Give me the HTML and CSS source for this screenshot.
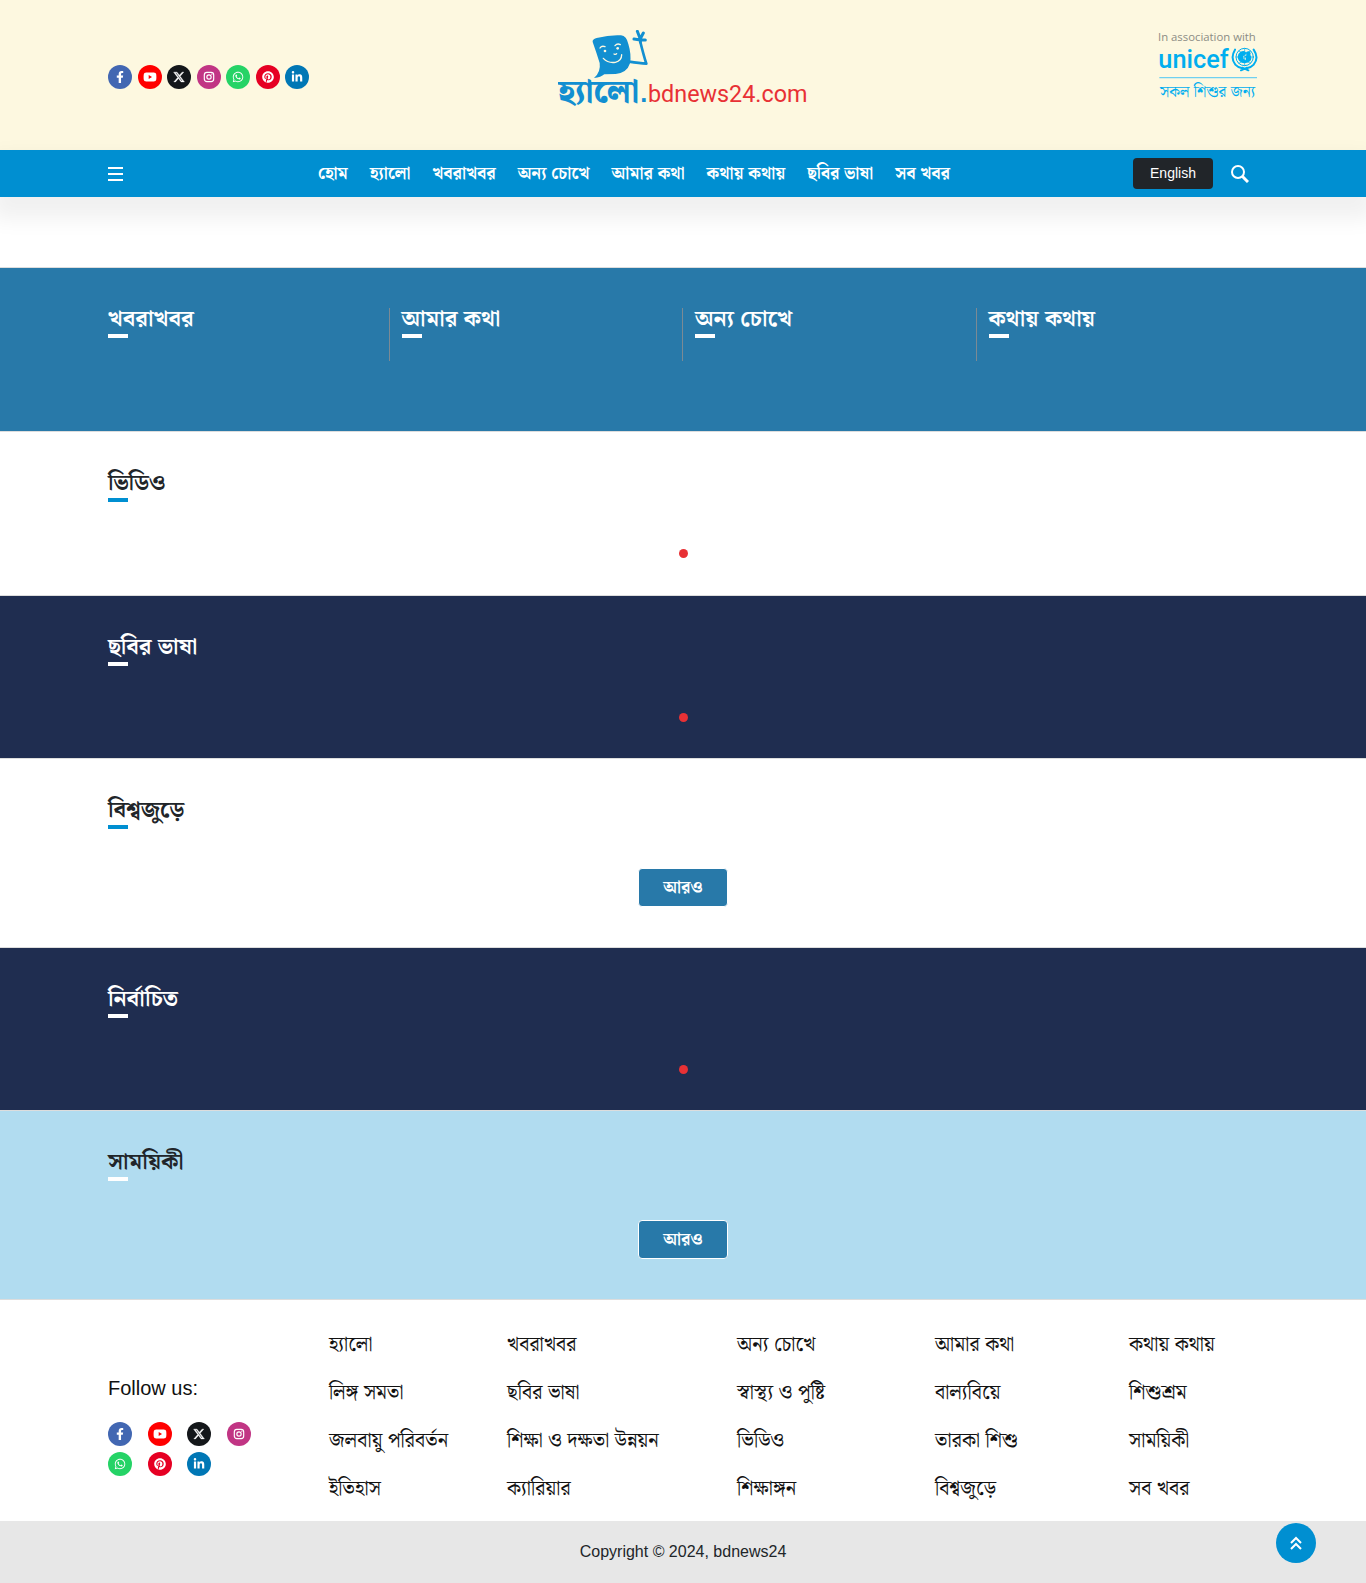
FILE: index.html
```html
<!DOCTYPE html>
<html lang="bn">
<head>
<meta charset="utf-8">
<meta name="viewport" content="width=device-width, initial-scale=1">
<title>হ্যালো</title>
<link rel="stylesheet" href="styles.css">
</head>
<body>
<svg class="sprite" aria-hidden="true">
  <symbol id="facebook" viewBox="0 0 320 512"><path d="M279.14 288l14.22-92.66h-88.91v-60.13c0-25.35 12.42-50.06 52.24-50.06h40.42V6.26S260.43 0 225.36 0c-73.22 0-121.08 44.38-121.08 124.72v70.62H22.89V288h81.39v224h100.17V288z"/></symbol>
  <symbol id="youtube" viewBox="0 0 576 512"><path d="M549.655 124.083c-6.281-23.65-24.787-42.276-48.284-48.597C458.781 64 288 64 288 64S117.22 64 74.629 75.486c-23.497 6.322-42.003 24.947-48.284 48.597-11.412 42.867-11.412 132.305-11.412 132.305s0 89.438 11.412 132.305c6.281 23.65 24.787 41.5 48.284 47.821C117.22 448 288 448 288 448s170.78 0 213.371-11.486c23.497-6.321 42.003-24.171 48.284-47.821 11.412-42.867 11.412-132.305 11.412-132.305s0-89.438-11.412-132.305zm-317.51 213.508V175.185l142.739 81.205-142.739 81.201z"/></symbol>
  <symbol id="x" viewBox="0 0 512 512"><path d="M389.2 48h70.6L305.6 224.2 487 464H345L233.7 318.6 106.5 464H35.8L200.7 275.5 26.8 48H172.4L272.9 180.9 389.2 48zM364.4 421.8h39.1L151.1 88h-42L364.4 421.8z" stroke="currentColor" stroke-width="16"/></symbol>
  <symbol id="instagram" viewBox="0 0 448 512"><rect x="24" y="56" width="400" height="400" rx="110" fill="none" stroke="currentColor" stroke-width="50"/><circle cx="224" cy="256" r="92" fill="none" stroke="currentColor" stroke-width="50"/><circle cx="343" cy="137" r="27"/></symbol>
  <symbol id="whatsapp" viewBox="0 0 448 512"><path d="M380.9 97.1C339 55.1 283.2 32 223.9 32c-122.4 0-222 99.6-222 222 0 39.1 10.2 77.3 29.6 111L0 480l117.7-30.9c32.4 17.7 68.9 27 106.1 27h.1c122.3 0 224.1-99.6 224.1-222 0-59.3-25.2-115-67.1-157zm-157 341.6c-33.2 0-65.7-8.9-94-25.7l-6.7-4-69.8 18.3L72 359.2l-4.4-7c-18.5-29.4-28.2-63.3-28.2-98.2 0-101.7 82.8-184.5 184.6-184.5 49.3 0 95.6 19.2 130.4 54.1 34.8 34.9 56.2 81.2 56.1 130.5 0 101.8-84.9 184.6-186.6 184.6zm101.2-138.2c-5.5-2.8-32.8-16.2-37.9-18-5.1-1.9-8.8-2.8-12.5 2.8-3.7 5.6-14.3 18-17.6 21.8-3.2 3.7-6.5 4.2-12 1.4-32.6-16.3-54-29.1-75.5-66-5.7-9.8 5.7-9.1 16.3-30.3 1.8-3.7.9-6.9-.5-9.7-1.4-2.8-12.5-30.1-17.1-41.2-4.5-10.8-9.1-9.3-12.5-9.5-3.2-.2-6.9-.2-10.6-.2-3.7 0-9.7 1.4-14.8 6.9-5.1 5.6-19.4 19-19.4 46.3 0 27.3 19.9 53.7 22.6 57.4 2.8 3.7 39.1 59.7 94.8 83.8 35.2 15.2 49 16.5 66.6 13.9 10.7-1.6 32.8-13.4 37.4-26.4 4.6-13 4.6-24.1 3.2-26.4-1.3-2.5-5-3.9-10.5-6.6z"/></symbol>
  <symbol id="pinterest" viewBox="0 0 496 512"><path d="M496 256c0 137-111 248-248 248-25.6 0-50.2-3.9-73.4-11.1 10.1-16.5 25.2-43.5 30.8-65 3-11.6 15.4-59 15.4-59 8.1 15.4 31.7 28.5 56.8 28.5 74.8 0 128.7-68.8 128.7-154.3 0-81.9-66.9-143.2-152.9-143.2-107 0-163.9 71.8-163.9 150.1 0 36.4 19.4 81.7 50.3 96.1 4.7 2.2 7.2 1.2 8.3-3.3.8-3.4 5-20.3 6.9-28.1.6-2.5.3-4.7-1.7-7.1-10.1-12.5-18.3-35.3-18.3-56.6 0-54.7 41.4-107.6 112-107.6 60.9 0 103.6 41.5 103.6 100.9 0 67.1-33.9 113.6-78 113.6-24.3 0-42.6-20.1-36.7-44.8 7-29.5 20.5-61.3 20.5-82.6 0-19-10.2-34.9-31.4-34.9-24.9 0-44.9 25.7-44.9 60.2 0 22 7.4 36.8 7.4 36.8s-24.5 103.8-29 123.2c-5 21.4-3 51.6-.9 71.2C65.4 450.9 0 361.1 0 256 0 119 111 8 248 8s248 111 248 248z"/></symbol>
  <symbol id="linkedin" viewBox="0 0 448 512"><path d="M100.28 448H7.4V148.9h92.88zM53.79 108.1C24.09 108.1 0 83.5 0 53.8a53.79 53.79 0 0 1 107.58 0c0 29.7-24.1 54.3-53.79 54.3zM447.9 448h-92.68V302.4c0-34.7-.7-79.2-48.29-79.2-48.29 0-55.69 37.7-55.69 76.7V448h-92.78V148.9h89.08v40.8h1.3c12.4-23.5 42.69-48.3 87.88-48.3 94 0 111.28 61.9 111.28 142.3V448z"/></symbol>
</svg>

<header class="masthead">
  <div class="container masthead-row">
    <div class="social social-top">
      <a class="facebook" href="#" aria-label="Facebook"><svg><use href="#facebook"/></svg></a>
      <a class="youtube" href="#" aria-label="YouTube"><svg><use href="#youtube"/></svg></a>
      <a class="x" href="#" aria-label="X"><svg><use href="#x"/></svg></a>
      <a class="instagram" href="#" aria-label="Instagram"><svg><use href="#instagram"/></svg></a>
      <a class="whatsapp" href="#" aria-label="WhatsApp"><svg><use href="#whatsapp"/></svg></a>
      <a class="pinterest" href="#" aria-label="Pinterest"><svg><use href="#pinterest"/></svg></a>
      <a class="linkedin" href="#" aria-label="LinkedIn"><svg><use href="#linkedin"/></svg></a>
    </div>
    <a class="logo" href="#">
      <svg width="250" height="90" viewBox="55 30 750 270">
        <path fill="#128fd1" d="M159 66Q157 58 171 54Q211 44 244 46Q261 48 266 72Q276 105 271 130Q262 159 228 162Q207 162 194 163Q184 172 163 174Q184 156 180 129Q171 100 159 66Z"/>
        <g fill="none" stroke="#128fd1" stroke-linecap="round" stroke-linejoin="round">
          <path stroke-width="8" d="M268 125Q300 130 320 131Q313 110 302 66"/>
          <path stroke-width="9" d="M302 66V50M302 60L283 57M302 60H317M301 55L293 34M303 54L311 39"/>
        </g>
        <g fill="none" stroke="#fdf8e0" stroke-linecap="round" stroke-width="4">
          <path d="M181 84Q186 76 196 80M226 77Q233 69 242 74M191 115Q205 130 227 127Q246 122 246 104M223 102Q228 105 231 101"/>
        </g>
        <circle cx="196" cy="93" r="4" fill="#fdf8e0"/><circle cx="234" cy="85" r="4" fill="#fdf8e0"/>
        <text class="logo-word" x="54" y="246">হ্যালো</text>
        <text class="logo-dot" x="302" y="246">.</text>
        <text class="logo-domain" x="325" y="246">bdnews24.com</text>
      </svg>
    </a>
    <a class="partner" href="#">
      <svg width="100" height="70" viewBox="84 45 300 210">
        <text class="partner-note" x="84" y="78">In association with</text>
        <text class="partner-name" x="85" y="159">unicef</text>
        <g fill="none" stroke="#00aeef" stroke-linecap="round">
          <path stroke-width="6" d="M315 104Q300 129 316 149Q324 158 337 160M371 104Q388 129 371 149Q363 158 350 160M333 166L351 158M355 166L337 158"/>
          <circle cx="344" cy="126" r="26" stroke-width="3"/>
          <path stroke-width="2" d="M318 126H370M344 100V152M326 108Q344 120 362 108M326 145Q344 133 362 145"/>
        </g>
        <path fill="#00aeef" d="M330 112Q343 103 349 114Q347 123 339 124Q339 132 347 136Q350 129 344 124Q352 116 362 121Q367 132 360 139Q352 146 338 144Q324 139 323 126Q324 116 330 112Z"/>
        <circle cx="355" cy="116" r="7" fill="#00aeef"/>
        <path stroke="#6fd0f0" stroke-width="4" d="M88 188H381"/>
        <text class="partner-tag" x="90" y="246">সকল শিশুর জন্য</text>
      </svg>
    </a>
  </div>
</header>

<nav class="navbar">
  <div class="container navbar-row">
    <button class="menu-button" type="button" aria-label="Menu"><svg width="15" height="14" viewBox="0 0 15 14"><path stroke="#fff" stroke-width="2" d="M0 1H15M0 7H15M0 13H15"/></svg></button>
    <ul class="menu">
      <li><a href="#">হোম</a></li>
      <li><a href="#">হ্যালো</a></li>
      <li><a href="#">খবরাখবর</a></li>
      <li><a href="#">অন্য চোখে</a></li>
      <li><a href="#">আমার কথা</a></li>
      <li><a href="#">কথায় কথায়</a></li>
      <li><a href="#">ছবির ভাষা</a></li>
      <li><a href="#">সব খবর</a></li>
    </ul>
    <div class="tools">
      <a class="language" href="#">English</a>
      <button class="search" type="button" aria-label="Search"><svg width="18" height="18" viewBox="0 0 18 18"><circle cx="7" cy="7" r="6" fill="none" stroke="#fff" stroke-width="2"/><path d="M11 11L17 17" stroke="#fff" stroke-width="3"/></svg></button>
    </div>
  </div>
</nav>

<main>
  <section class="band blue">
    <div class="topics">
      <div class="topic"><h2>খবরাখবর</h2></div>
      <div class="topic"><h2>আমার কথা</h2></div>
      <div class="topic"><h2>অন্য চোখে</h2></div>
      <div class="topic"><h2>কথায় কথায়</h2></div>
    </div>
  </section>
  <section class="band loading video"><div class="container"><h2>ভিডিও</h2><div class="dot"></div></div></section>
  <section class="band loading navy"><div class="container"><h2>ছবির ভাষা</h2><div class="dot"></div></div></section>
  <section class="band"><div class="container"><h2>বিশ্বজুড়ে</h2><button class="more" type="button">আরও</button></div></section>
  <section class="band loading navy"><div class="container"><h2>নির্বাচিত</h2><div class="dot"></div></div></section>
  <section class="band sky"><div class="container"><h2>সাময়িকী</h2><button class="more" type="button">আরও</button></div></section>
</main>

<footer>
  <div class="container footer-row">
    <div class="follow">
      <p>Follow us:</p>
      <div class="social social-bottom">
        <a class="facebook" href="#" aria-label="Facebook"><svg><use href="#facebook"/></svg></a>
        <a class="youtube" href="#" aria-label="YouTube"><svg><use href="#youtube"/></svg></a>
        <a class="x" href="#" aria-label="X"><svg><use href="#x"/></svg></a>
        <a class="instagram" href="#" aria-label="Instagram"><svg><use href="#instagram"/></svg></a>
        <a class="whatsapp" href="#" aria-label="WhatsApp"><svg><use href="#whatsapp"/></svg></a>
        <a class="pinterest" href="#" aria-label="Pinterest"><svg><use href="#pinterest"/></svg></a>
        <a class="linkedin" href="#" aria-label="LinkedIn"><svg><use href="#linkedin"/></svg></a>
      </div>
    </div>
    <div class="links">
      <a href="#">হ্যালো</a><a href="#">খবরাখবর</a><a href="#">অন্য চোখে</a><a href="#">আমার কথা</a><a href="#">কথায় কথায়</a>
      <a href="#">লিঙ্গ সমতা</a><a href="#">ছবির ভাষা</a><a href="#">স্বাস্থ্য ও পুষ্টি</a><a href="#">বাল্যবিয়ে</a><a href="#">শিশুশ্রম</a>
      <a href="#">জলবায়ু পরিবর্তন</a><a href="#">শিক্ষা ও দক্ষতা উন্নয়ন</a><a href="#">ভিডিও</a><a href="#">তারকা শিশু</a><a href="#">সাময়িকী</a>
      <a href="#">ইতিহাস</a><a href="#">ক্যারিয়ার</a><a href="#">শিক্ষাঙ্গন</a><a href="#">বিশ্বজুড়ে</a><a href="#">সব খবর</a>
    </div>
  </div>
  <p class="copyright">Copyright © 2024, bdnews24</p>
</footer>
<a class="to-top" href="#" aria-label="Back to top"><svg width="14" height="14" viewBox="0 0 14 14"><path d="M2 7L7 2L12 7M2 13L7 8L12 13" fill="none" stroke="#fff" stroke-width="2"/></svg></a>
</body>
</html>
```
FILE: styles.css
```css
* { box-sizing: border-box; }

body {
  margin: 0;
  background: #fff;
  color: #212529;
  font-family: "Liberation Sans", "Noto Serif Bengali", "Noto Sans Bengali", sans-serif;
  font-size: 16px;
}

a { color: inherit; text-decoration: none; }
button { border: 0; padding: 0; background: none; color: inherit; font: inherit; cursor: pointer; }
h2, p, ul { margin: 0; padding: 0; }
ul { list-style: none; }
svg { display: block; }

.sprite { position: absolute; width: 0; height: 0; }
.container { max-width: 1174px; margin: 0 auto; padding: 0 12px; }

/* Masthead */
.masthead { padding: 30px 0; background: #fdf8e0; }
.masthead-row { display: grid; grid-template-columns: 1fr auto 1fr; }
.partner { justify-self: end; }

.social a {
  display: flex;
  align-items: center;
  justify-content: center;
  width: 24px;
  height: 24px;
  border-radius: 50%;
  color: #fff;
}
.social svg { width: 14px; height: 12px; fill: currentColor; }
.social-top { display: flex; justify-content: space-between; width: 201px; margin-top: 35px; }
.facebook { background: #4267b2; }
.youtube { background: #f00; }
.x { background: #14171a; }
.instagram { background: #c13584; }
.whatsapp { background: #25d366; }
.pinterest { background: #e60023; }
.linkedin { background: #0077b5; }

.logo-word { fill: #128fd1; font-size: 96px; font-weight: 900; }
.logo-dot { fill: #128fd1; font-size: 76px; font-weight: 700; }
.logo-domain { fill: #e83135; font-family: Roboto, sans-serif; font-size: 70px; }
.partner-note { fill: #8c8c85; font-family: "Open Sans", sans-serif; font-size: 34px; }
.partner-name { fill: #00aeef; font-family: Roboto, sans-serif; font-size: 76px; font-weight: 500; }
.partner-tag { fill: #00aeef; font-size: 46px; }

/* Navigation */
.navbar { position: relative; background: #008fd1; color: #fff; box-shadow: 0 14px 20px 8px rgba(0, 0, 0, .06); }
.navbar-row { display: flex; align-items: center; justify-content: space-between; height: 47px; }
.menu-button { width: 27px; }
.menu { display: flex; gap: 22px; font-size: 17px; font-weight: 700; line-height: 30px; white-space: nowrap; }
.tools { display: flex; align-items: center; gap: 18px; padding-right: 9px; }
.language { width: 80px; border-radius: 4px; background: #212529; font-size: 14px; line-height: 31px; text-align: center; }

/* Content bands */
main { padding-top: 70px; overflow-x: clip; }
.band { padding: 40px 0; border-bottom: 1px solid #ddd; }
.band h2 { margin-bottom: 39px; font-size: 23px; font-weight: 700; line-height: 20px; white-space: nowrap; }
.band h2::after { content: ""; display: block; width: 20px; height: 4px; margin-top: 6px; background: #008fd1; }
.blue { padding-bottom: 70px; border-top: 1px solid #ddd; background: #2879a9; color: #fff; }
.navy { background: #1f2d50; color: #fff; }
.sky { background: #b1dcf0; }
.blue h2::after, .navy h2::after, .sky h2::after { background: #fff; }

.topics { display: grid; grid-template-columns: repeat(4, 1fr); max-width: 1174px; margin: 0 auto; }
.topic { padding: 0 12px; border-right: 1px solid #7b8a94; }
.topic:last-child { border-right: 0; }
.topic h2 { margin-bottom: 23px; }

.loading { padding-bottom: 36px; }
.loading h2 { margin-bottom: 47px; }
.video { padding-bottom: 37px; }
.dot { width: 9px; height: 9px; margin: 0 auto; border-radius: 50%; background: #e83135; }

.more {
  display: block;
  width: 90px;
  margin: 0 auto;
  border: 1px solid #fff;
  border-radius: 4px;
  background: #2879a9;
  color: #fff;
  font-size: 17px;
  font-weight: 700;
  line-height: 37px;
}

/* Footer */
.footer-row { display: grid; grid-template-columns: 221px 1fr; padding-top: 21px; padding-bottom: 8px; }
.follow p { margin-top: 56px; font-size: 20px; line-height: 22px; }
.follow { color: #111; }
.social-bottom { display: grid; grid-template-columns: repeat(4, 24px); justify-content: space-between; row-gap: 6px; width: 143px; margin-top: 23px; }
.links { display: grid; grid-template-columns: 178fr 230fr 198fr 194fr 129fr; font-size: 20px; line-height: 46px; white-space: nowrap; color: #111; }
.links a { height: 48px; }
.copyright { background: #e7e7e7; font-size: 16px; line-height: 62px; text-align: center; }

.to-top {
  position: fixed;
  right: 50px;
  bottom: 20px;
  display: grid;
  place-items: center;
  width: 40px;
  height: 40px;
  border-radius: 50%;
  background: #008fd1;
}
```
